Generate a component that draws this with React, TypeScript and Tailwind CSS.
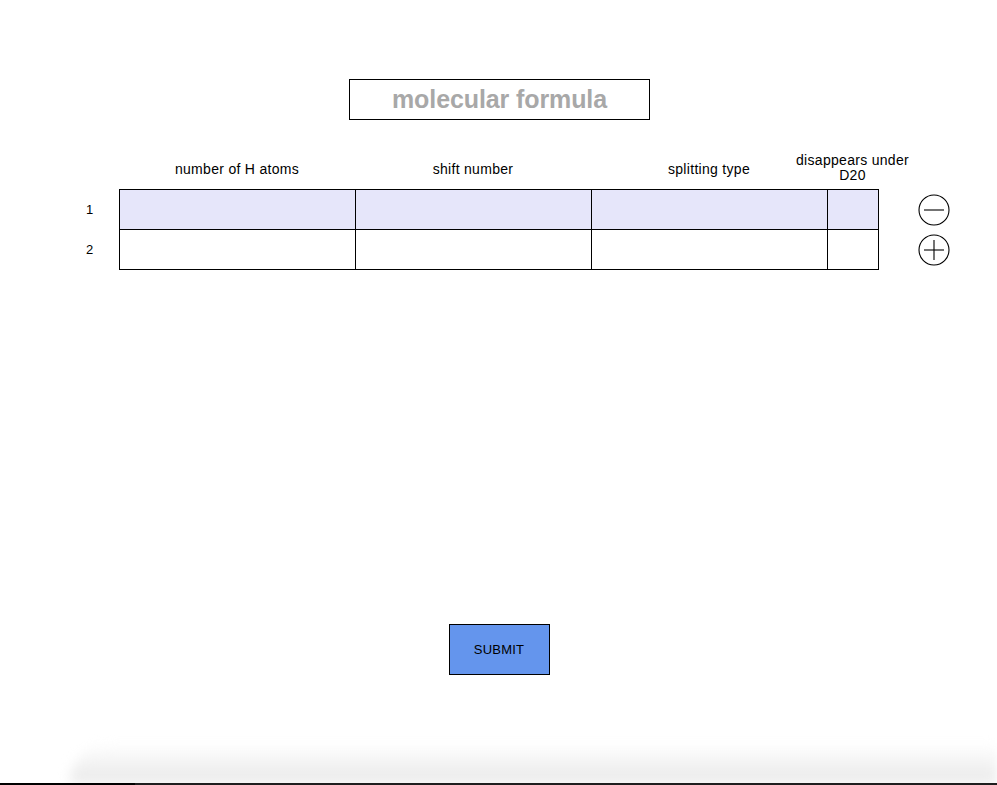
import { useState } from "react";

const HEADERS = ["number of H atoms", "shift number", "splitting type"];

function CircleButton({ kind, onClick }: { kind: "minus" | "plus"; onClick?: () => void }) {
  return (
    <button onClick={onClick} aria-label={kind === "minus" ? "Remove row" : "Add row"} className="block h-[32px] w-[32px]">
      <svg viewBox="0 0 32 32" className="h-[32px] w-[32px]">
        <circle cx="16" cy="16" r="15" fill="none" stroke="#000" strokeWidth="1.1" />
        <path d="M6 16h20" stroke="#000" strokeWidth="1.1" />
        {kind === "plus" && <path d="M16 6v20" stroke="#000" strokeWidth="1.1" />}
      </svg>
    </button>
  );
}

export default function App() {
  const [rows, setRows] = useState(2);

  return (
    <div className="relative h-[785px] w-full overflow-hidden bg-white font-['Liberation_Sans',Arial,sans-serif] text-black">
      <div className="pt-[79px]">
        {/* formula box */}
        <div className="flex justify-center pl-[2px]">
          <div className="flex h-[41px] w-[301px] items-center justify-center border border-black">
            <span className="text-[25px] font-bold tracking-[-0.1px] text-[#a8a8a8]">molecular formula</span>
          </div>
        </div>

        {/* header row */}
        <div className="mt-[32px] flex h-[34px] items-center text-[14px] leading-[15px] tracking-[0.3px]">
          <div className="w-[119px]" />
          <div className="flex w-[760px] items-center pt-px">
            {HEADERS.map((h) => (
              <div key={h} className="w-[236px] text-center">{h}</div>
            ))}
            <div className="-mt-[4px] w-[51px] whitespace-nowrap text-center">
              <div className="-mx-[40px]">disappears under</div>
              <div>D20</div>
            </div>
          </div>
        </div>

        {/* table */}
        <div className="mt-[3px] flex items-start">
          <div className="w-[119px] pt-px text-[13px]">
            {Array.from({ length: rows }).map((_, i) => (
              <div key={i} className="flex h-[40px] items-center justify-center pl-[60px]">
                <span>{i + 1}</span>
              </div>
            ))}
          </div>
          <div className="w-[760px] border-t border-l border-black">
            {Array.from({ length: rows }).map((_, i) => (
              <div key={i} className={`grid h-[40px] grid-cols-[236px_236px_236px_51px] ${i === 0 ? "bg-[#e6e6fa]" : "bg-white"}`}>
                <div className="border-r border-b border-black" />
                <div className="border-r border-b border-black" />
                <div className="border-r border-b border-black" />
                <div className="border-r border-b border-black" />
              </div>
            ))}
          </div>
          <div className="flex flex-col pl-[39px] pt-px">
            <div className="flex h-[40px] items-center">
              <CircleButton kind="minus" onClick={() => setRows((r) => Math.max(1, r - 1))} />
            </div>
            <div className="flex h-[40px] items-center">
              <CircleButton kind="plus" onClick={() => setRows((r) => r + 1)} />
            </div>
          </div>
        </div>

        {/* submit */}
        <div className="mt-[354px] flex justify-center">
          <button className="ml-px h-[51px] w-[101px] border border-black bg-[#6495ed] text-[13px] tracking-[0.2px] text-black">SUBMIT</button>
        </div>
      </div>

      {/* bottom window shadow */}
      <div className="absolute inset-x-0 bottom-[2px] h-[40px] pl-[70px]">
        <div className="h-full rounded-tl-[70px] bg-gradient-to-b from-white to-[#e8e8e8] blur-[6px]" />
      </div>
      <div className="absolute inset-x-0 bottom-0 flex h-[2px]">
        <div className="w-[135px] bg-black" />
        <div className="flex-1 bg-[#1e1e1e]" />
      </div>
    </div>
  );
}
